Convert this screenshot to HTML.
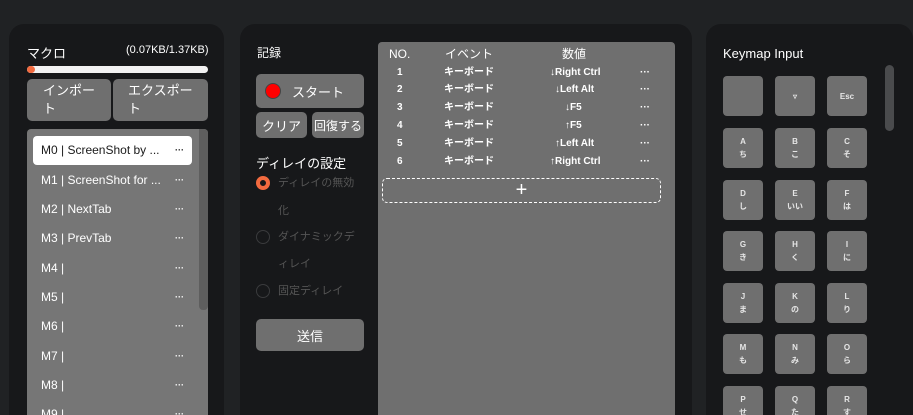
<!DOCTYPE html>
<html><head><meta charset="utf-8"><style>
*{box-sizing:border-box;margin:0;padding:0}
html,body{width:913px;height:415px;overflow:hidden}
body{background:#202224;font-family:"Liberation Sans","Noto Sans CJK JP",sans-serif;color:#fff;position:relative}
.p{position:absolute;background:#17181a;border-radius:15px 15px 0 0;top:24px;height:391px}
.a{position:absolute;white-space:nowrap}
.btn{position:absolute;background:#6f6f6f;border-radius:5px;color:#fff;display:flex;align-items:center;justify-content:center;font-size:13px;white-space:nowrap}
.row{position:absolute;left:6px;width:159px;height:29px;font-size:12px;line-height:29px;padding-left:8px;color:#fff;white-space:nowrap}
.row .d{position:absolute;right:8px;top:0;font-size:9px;font-weight:bold}
.tr{position:absolute;left:0;width:297px;font-size:10px;font-weight:bold;height:18px;line-height:18px;overflow:hidden}
.tr span{position:absolute;top:0;white-space:nowrap}
.key{position:absolute;width:40px;height:40px;background:#6f6f6f;border-radius:4px;font-size:8px;font-weight:bold;color:#e6e6e6;text-align:center;display:flex;flex-direction:column;justify-content:center;line-height:13px}
.rad{position:absolute;left:256px;width:14px;height:14px;border-radius:50%;border:1px solid #3a3b3d}
.rt{position:absolute;left:278px;font-size:11px;color:#555;white-space:nowrap;line-height:14px}
</style></head><body>
<div class="p" style="left:9px;width:215px"></div>
<div class="p" style="left:240px;width:452px"></div>
<div class="p" style="left:706px;width:207px"></div>

<div class="a" style="left:27px;top:43px;font-size:13px">マクロ</div>
<div class="a" style="left:126px;top:44px;font-size:11px">(0.07KB/1.37KB)</div>
<div class="a" style="left:27px;top:66px;width:181px;height:7px;background:#f2f2f2;border-radius:4px"></div>
<div class="a" style="left:27px;top:66px;width:8px;height:7px;background:#f26a3f;border-radius:4px"></div>
<div class="btn" style="left:27px;top:79px;width:84px;height:42px;display:block;padding:3px 0 0 16px;line-height:18px">インポー<br>ト</div>
<div class="btn" style="left:113px;top:79px;width:95px;height:42px;display:block;padding:3px 0 0 15px;line-height:18px">エクスポー<br>ト</div>
<div class="a" style="left:27px;top:129px;width:181px;height:290px;background:#767676;border-radius:4px 4px 0 0;overflow:hidden">
<div class="a" style="left:172px;top:0;width:9px;height:181px;background:#5e5e5e;border-radius:0 0 4px 4px"></div>
<div class="row" style="top:7px;background:#fff;color:#1a1a1a;border-radius:4px">M0 | ScreenShot by ...<span class="d">···</span></div>
<div class="row" style="top:37px">M1 | ScreenShot for ...<span class="d">···</span></div>
<div class="row" style="top:66px">M2 | NextTab<span class="d">···</span></div>
<div class="row" style="top:95px">M3 | PrevTab<span class="d">···</span></div>
<div class="row" style="top:125px">M4 |<span class="d">···</span></div>
<div class="row" style="top:154px">M5 |<span class="d">···</span></div>
<div class="row" style="top:183px">M6 |<span class="d">···</span></div>
<div class="row" style="top:213px">M7 |<span class="d">···</span></div>
<div class="row" style="top:242px">M8 |<span class="d">···</span></div>
<div class="row" style="top:271px">M9 |<span class="d">···</span></div>
</div>

<div class="a" style="left:257px;top:44px;font-size:12px">記録</div>
<div class="btn" style="left:256px;top:74px;width:108px;height:34px;font-size:13px"><span style="position:absolute;left:9px;top:9px;width:16px;height:16px;border-radius:50%;background:#f00;border:1px solid #444"></span><span style="margin-left:16px">スタート</span></div>
<div class="btn" style="left:256px;top:112px;width:51px;height:26px">クリア</div>
<div class="btn" style="left:312px;top:112px;width:52px;height:26px;font-size:12px">回復する</div>
<div class="a" style="left:256px;top:153px;font-size:13px">ディレイの設定</div>
<div class="rad" style="top:176px;border:4px solid #f26a3f"></div>
<div class="rt" style="top:176px">ディレイの無効</div>
<div class="rt" style="top:204px">化</div>
<div class="rad" style="top:230px"></div>
<div class="rt" style="top:230px">ダイナミックデ</div>
<div class="rt" style="top:257px">ィレイ</div>
<div class="rad" style="top:284px"></div>
<div class="rt" style="top:284px">固定ディレイ</div>
<div class="btn" style="left:256px;top:319px;width:108px;height:32px;font-size:13px">送信</div>

<div class="a" style="left:378px;top:42px;width:297px;height:380px;background:#6f6f6f;border-radius:4px">
<div class="tr" style="top:2px;font-size:12px;font-weight:normal;height:20px;line-height:20px"><span style="left:11px">NO.</span><span style="left:67px">イベント</span><span style="left:184px">数値</span></div>
<div class="tr" style="top:22px"><span style="left:19px">1</span><span style="left:66px">キーボード</span><span style="left:172px">↓Right Ctrl</span><span style="left:262px">···</span></div>
<div class="tr" style="top:39px"><span style="left:19px">2</span><span style="left:66px">キーボード</span><span style="left:177px">↓Left Alt</span><span style="left:262px">···</span></div>
<div class="tr" style="top:57px"><span style="left:19px">3</span><span style="left:66px">キーボード</span><span style="left:187px">↓F5</span><span style="left:262px">···</span></div>
<div class="tr" style="top:75px"><span style="left:19px">4</span><span style="left:66px">キーボード</span><span style="left:187px">↑F5</span><span style="left:262px">···</span></div>
<div class="tr" style="top:93px"><span style="left:19px">5</span><span style="left:66px">キーボード</span><span style="left:177px">↑Left Alt</span><span style="left:262px">···</span></div>
<div class="tr" style="top:111px"><span style="left:19px">6</span><span style="left:66px">キーボード</span><span style="left:172px">↑Right Ctrl</span><span style="left:262px">···</span></div>
<div class="a" style="left:4px;top:136px;width:279px;height:25px;border:1px dashed #fff;border-radius:5px;text-align:center;font-size:20px;line-height:22px">+</div>
</div>

<div class="a" style="left:723px;top:46px;font-size:13px">Keymap Input</div>
<div class="a" style="left:885px;top:65px;width:9px;height:66px;background:#4a4b4d;border-radius:5px"></div>
<div class="key" style="left:723px;top:76px"></div>
<div class="key" style="left:775px;top:76px">▿</div>
<div class="key" style="left:827px;top:76px">Esc</div>
<div class="key" style="left:723px;top:128px">A<br>ち</div><div class="key" style="left:775px;top:128px">B<br>こ</div><div class="key" style="left:827px;top:128px">C<br>そ</div>
<div class="key" style="left:723px;top:180px">D<br>し</div><div class="key" style="left:775px;top:180px">E<br>いい</div><div class="key" style="left:827px;top:180px">F<br>は</div>
<div class="key" style="left:723px;top:231px">G<br>き</div><div class="key" style="left:775px;top:231px">H<br>く</div><div class="key" style="left:827px;top:231px">I<br>に</div>
<div class="key" style="left:723px;top:283px">J<br>ま</div><div class="key" style="left:775px;top:283px">K<br>の</div><div class="key" style="left:827px;top:283px">L<br>り</div>
<div class="key" style="left:723px;top:334px">M<br>も</div><div class="key" style="left:775px;top:334px">N<br>み</div><div class="key" style="left:827px;top:334px">O<br>ら</div>
<div class="key" style="left:723px;top:386px">P<br>せ</div><div class="key" style="left:775px;top:386px">Q<br>た</div><div class="key" style="left:827px;top:386px">R<br>す</div>
</body></html>
